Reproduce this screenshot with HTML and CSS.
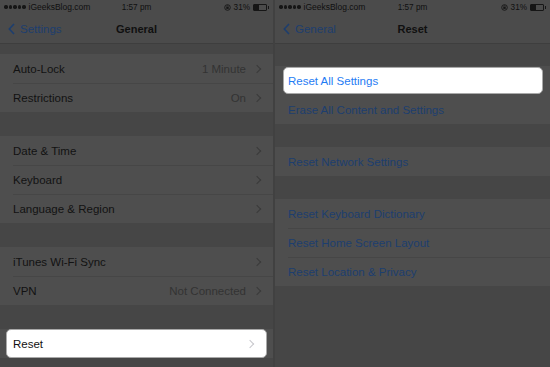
FILE: index.html
```html
<!DOCTYPE html>
<html lang="en">
<head>
    <meta charset="UTF-8">
    <meta name="viewport" content="width=device-width, initial-scale=1.0">
    <title>Reset - General Settings</title>
    <link rel="stylesheet" href="styles.css">
</head>
<body>

<div class="screens">

    <!-- General screen -->
    <section class="phone left">
        <div class="status">
            <div class="carrier">
                <span class="dots"><i></i><i></i><i></i><i></i><i></i></span>
                iGeeksBlog.com
            </div>
            <div class="time">1:57 pm</div>
            <div class="battery-area">
                <svg class="rotlock" width="7" height="7" viewBox="0 0 7 7"><circle cx="3.5" cy="3.5" r="2.8" fill="none" stroke="#161616" stroke-width="0.9"/><rect x="2.3" y="3" width="2.4" height="1.9" fill="#161616"/><path d="M2.8 3V2.4a0.7 0.7 0 0 1 1.4 0V3" fill="none" stroke="#161616" stroke-width="0.6"/></svg>
                <span>31%</span>
                <span class="battery"><span class="level"></span></span>
            </div>
        </div>
        <div class="nav">
            <a href="#" class="back">
                <svg width="7" height="12" viewBox="0 0 7 12"><polyline points="6,1 1.3,6 6,11" fill="none" stroke="#1d3e6e" stroke-width="1.6"/></svg>
                Settings
            </a>
            <span class="title">General</span>
            <span></span>
        </div>

        <div class="group top-gap-sm">
            <div class="row"><span class="label">Auto-Lock</span><span class="value">1 Minute</span><span class="chev"></span></div>
            <div class="row"><span class="label">Restrictions</span><span class="value">On</span><span class="chev"></span></div>
        </div>
        <div class="group">
            <div class="row"><span class="label">Date &amp; Time</span><span class="chev"></span></div>
            <div class="row"><span class="label">Keyboard</span><span class="chev"></span></div>
            <div class="row"><span class="label">Language &amp; Region</span><span class="chev"></span></div>
        </div>
        <div class="group">
            <div class="row"><span class="label">iTunes Wi-Fi Sync</span><span class="chev"></span></div>
            <div class="row"><span class="label">VPN</span><span class="value">Not Connected</span><span class="chev"></span></div>
        </div>
        <div class="group">
            <div class="row active"><span class="label">Reset</span><span class="chev"></span></div>
        </div>
    </section>

    <!-- Reset screen -->
    <section class="phone right">
        <div class="status">
            <div class="carrier">
                <span class="dots"><i></i><i></i><i></i><i></i><i></i></span>
                iGeeksBlog.com
            </div>
            <div class="time">1:57 pm</div>
            <div class="battery-area">
                <svg class="rotlock" width="7" height="7" viewBox="0 0 7 7"><circle cx="3.5" cy="3.5" r="2.8" fill="none" stroke="#161616" stroke-width="0.9"/><rect x="2.3" y="3" width="2.4" height="1.9" fill="#161616"/><path d="M2.8 3V2.4a0.7 0.7 0 0 1 1.4 0V3" fill="none" stroke="#161616" stroke-width="0.6"/></svg>
                <span>31%</span>
                <span class="battery"><span class="level"></span></span>
            </div>
        </div>
        <div class="nav">
            <a href="#" class="back">
                <svg width="7" height="12" viewBox="0 0 7 12"><polyline points="6,1 1.3,6 6,11" fill="none" stroke="#1d3e6e" stroke-width="1.6"/></svg>
                General
            </a>
            <span class="title">Reset</span>
            <span></span>
        </div>

        <div class="group top-gap-lg">
            <div class="row action active">Reset All Settings</div>
            <div class="row action">Erase All Content and Settings</div>
        </div>
        <div class="group">
            <div class="row action">Reset Network Settings</div>
        </div>
        <div class="group">
            <div class="row action">Reset Keyboard Dictionary</div>
            <div class="row action">Reset Home Screen Layout</div>
            <div class="row action">Reset Location &amp; Privacy</div>
        </div>
    </section>

</div>

</body>
</html>
```

FILE: styles.css
```css
body {
    margin: 0;
    padding: 0;
    background-color: #464646;
    font-family: "Liberation Sans", Arial, sans-serif;
    color: #121212;
    width: 550px;
    height: 367px;
    overflow: hidden;
}
.screens {
    display: flex;
    height: 367px;
}
.phone {
    background-color: #464646;
    display: flex;
    flex-direction: column;
}
.phone.left {
    width: 273px;
    border-right: 2px solid #414141;
}
.phone.right {
    width: 275px;
}

/* status bar */
.status {
    height: 14px;
    display: grid;
    grid-template-columns: 1fr auto 1fr;
    align-items: center;
    font-size: 8.2px;
    color: #101010;
    background-color: #4b4b4b;
    padding: 0 4px;
}
.carrier {
    display: flex;
    align-items: center;
    gap: 3px;
    font-size: 8.5px;
}
.dots {
    display: flex;
    gap: 1px;
}
.dots i {
    width: 3.5px;
    height: 3.5px;
    border-radius: 50%;
    background-color: #161616;
}
.time {
    text-align: center;
}
.battery-area {
    display: flex;
    justify-content: flex-end;
    align-items: center;
    gap: 3px;
}
.battery {
    width: 12px;
    height: 5px;
    border: 1px solid #161616;
    border-radius: 1px;
    position: relative;
    margin-right: 2px;
}
.battery::after {
    content: "";
    position: absolute;
    right: -3px;
    top: 1px;
    width: 1px;
    height: 3px;
    background-color: #161616;
}
.battery .level {
    display: block;
    width: 5px;
    height: 5px;
    background-color: #161616;
}

/* nav bar */
.nav {
    height: 29px;
    display: grid;
    grid-template-columns: 1fr auto 1fr;
    align-items: center;
    background-color: #4b4b4b;
    border-bottom: 1px solid #3e3e3e;
    padding: 0 8px;
}
.back {
    display: flex;
    align-items: center;
    gap: 5px;
    color: #1d3e6e;
    text-decoration: none;
    font-size: 11.5px;
}
.title {
    font-size: 11px;
    font-weight: bold;
    color: #101010;
}

/* groups and rows */
.group {
    margin-top: 24px;
    background-color: #4e4e4e;
}
.phone.right .group {
    margin-top: 23px;
}
.group.top-gap-sm {
    margin-top: 10px;
}
.phone.right .group.top-gap-lg {
    margin-top: 22px;
}
.row {
    height: 29px;
    box-sizing: border-box;
    display: flex;
    align-items: center;
    margin-left: 13px;
    padding-right: 12px;
    font-size: 11.5px;
}
.row + .row {
    border-top: 1px solid #464646;
}
.label {
    flex: 1;
}
.value {
    color: #333333;
    margin-right: 8px;
}
.chev {
    width: 5px;
    height: 5px;
    border-top: 1px solid #3a3a3a;
    border-right: 1px solid #3a3a3a;
    transform: rotate(45deg);
    margin-right: 1px;
}
.row.action {
    color: #1d3e6e;
}

/* highlighted row */
.row.active {
    margin: 0 6px;
    padding-left: 6px;
    background-color: #ffffff;
    border: 1px solid #a9a9a9;
    border-radius: 5px;
    color: #111111;
}
.row.active .chev {
    border-color: #c7c7cc;
}
.row.action.active {
    margin: 1px 7px 1px 8px;
    height: 27px;
    padding-left: 4px;
    color: #1f7cf4;
}
.row.active + .row {
    border-top: none;
}
```
